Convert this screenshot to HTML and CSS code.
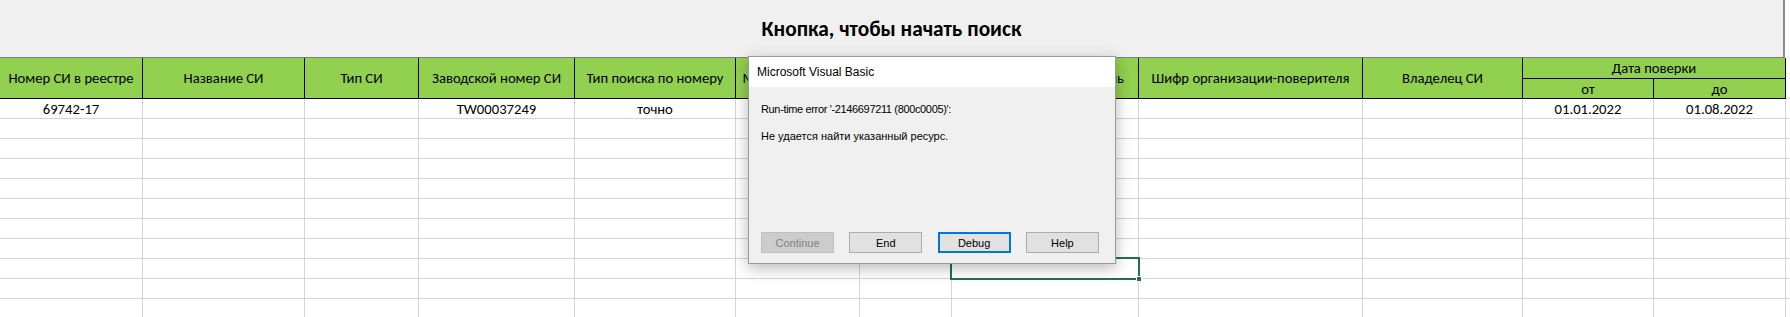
FILE: index.html
```html
<!DOCTYPE html>
<html lang="ru">
<head><meta charset="UTF-8">
<title>Поиск СИ</title>
<link rel="stylesheet" href="styles.css">
</head>
<body>

<div class="page">
  <!-- кнопка поверх листа -->
  <div class="banner">Кнопка, чтобы начать поиск</div>

  <section class="sheet">
    <div class="hd tall">Номер СИ в реестре</div>
    <div class="hd tall">Название СИ</div>
    <div class="hd tall">Тип СИ</div>
    <div class="hd tall">Заводской номер СИ</div>
    <div class="hd tall">Тип поиска по номеру</div>
    <div class="hd tall">Модификация СИ</div>
    <div class="hd tall"></div>
    <div class="hd tall">Организация-поверитель</div>
    <div class="hd tall">Шифр организации-поверителя</div>
    <div class="hd tall">Владелец СИ</div>
    <div class="hd wide">Дата поверки</div>
    <div class="blank tall"></div>
    <div class="hd">от</div>
    <div class="hd">до</div>

    <div class="c">69742-17</div><div class="c"></div><div class="c"></div><div class="c">TW00037249</div><div class="c">точно</div><div class="c"></div><div class="c"></div><div class="c"></div><div class="c"></div><div class="c"></div><div class="c">01.01.2022</div><div class="c">01.08.2022</div><div class="c"></div>
  </section>

  <div class="selection"><span class="handle"></span></div>

  <div class="dialog">
    <div class="dialog-title">Microsoft Visual Basic</div>
    <div class="dialog-body">
      <p class="err">Run-time error '-2146697211 (800c0005)':</p>
      <p class="msg">Не удается найти указанный ресурс.</p>
      <div class="buttons">
        <button class="btn" disabled>Continue</button>
        <button class="btn">End</button>
        <button class="btn focus">Debug</button>
        <button class="btn">Help</button>
      </div>
    </div>
  </div>
</div>

<script>
/* empty rows under the first data row */
const sheet = document.querySelector('.sheet');
for (let r = 0; r < 10; r++) {
  for (let i = 0; i < 13; i++) {
    const d = document.createElement('div');
    d.className = 'c';
    sheet.appendChild(d);
  }
}
</script>
</body>
</html>
```

FILE: styles.css
```css
*,*::before,*::after{box-sizing:border-box;margin:0;padding:0}
body{background:#fff;font-family:Carlito,'Liberation Sans',Arial,sans-serif;color:#000}

.page{position:relative;width:1790px;height:317px;overflow:hidden}

/* === BUTTON SHAPE === */
.banner{
  width:1785px;
  height:58px;
  background:#f0f0f0;
  border-right:2px solid #8c8c8c;
  border-bottom:1px solid #7f7f7f;
  display:flex;
  justify-content:center;
  align-items:center;
  font-size:21.33px;
  font-weight:700;
  padding-top:1px;
}

/* === SHEET === */
.sheet{
  display:grid;
  grid-template-columns:143px 162px 114px 156px 161px 124px 92px 187px 224px 160px 131px 132px 100px;
  grid-template-rows:21px 20px;
  grid-auto-rows:20px;
  font-size:14.67px;
}
.hd{
  background:#92d050;
  border-right:1px solid #000;
  border-bottom:1px solid #000;
  display:flex;
  justify-content:center;
  align-items:center;
  white-space:nowrap;
  overflow:hidden;
}
.tall{grid-row:span 2}
.wide{grid-column:span 2}
.blank{border-bottom:1px solid #d4d4d4}
.c{
  border-right:1px solid #d4d4d4;
  border-bottom:1px solid #d4d4d4;
  display:flex;
  justify-content:center;
  align-items:center;
  white-space:nowrap;
}

/* === ACTIVE CELL === */
.selection{
  position:absolute;
  left:950px;top:257px;
  width:190px;height:23px;
  border:2px solid #217346;
}
.handle{
  position:absolute;
  right:-4px;bottom:-4px;
  width:6px;height:6px;
  background:#217346;
  border:1px solid #fff;
}

/* === VBA ERROR BOX === */
.dialog{
  position:absolute;
  left:748px;top:56px;
  width:368px;height:208px;
  background:#f0f0f0;
  border:1px solid #9a9a9a;
  box-shadow:0 4px 14px rgba(0,0,0,.28);
  display:flex;
  flex-direction:column;
  font-family:'Liberation Sans',Arial,sans-serif;
}
.dialog-title{
  height:30px;
  background:#fff;
  padding-left:8px;
  display:flex;
  align-items:center;
  font-size:12px;
}
.dialog-body{
  flex:1;
  display:flex;
  flex-direction:column;
  padding:14px 12px 10px;
  font-size:11px;
  line-height:16px;
}
.dialog-body .err{letter-spacing:-.35px}
.dialog-body .msg{margin-top:11px}
.buttons{margin-top:auto;display:flex;gap:15.3px}
.btn{
  width:73px;height:21px;
  background:#e1e1e1;
  border:1px solid #adadad;
  font:11px 'Liberation Sans',Arial,sans-serif;
  color:#000;
}
.btn:disabled{background:#cccccc;border-color:#bfbfbf;color:#838383}
.btn.focus{border:2px solid #0078d7}
```
